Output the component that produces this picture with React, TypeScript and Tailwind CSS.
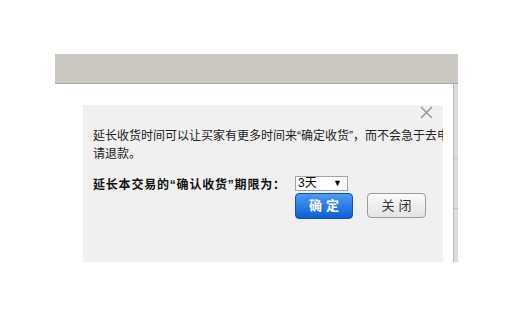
export default function App() {
  const cjk = { fontFamily: '"Liberation Sans", "Noto Sans CJK SC", sans-serif' };
  return (
    <div className="relative w-[527px] h-[318px] bg-white overflow-hidden" style={cjk}>
      {/* page behind the dialog */}
      <div className="ml-[55px] mt-[54px] w-[403px]">
        <div className="h-[30px] bg-[#cbc8c2] border-b border-[#a8a59f]" />
        <div className="flex h-[178px]">
          <div className="flex-1 bg-white border-r border-[#b9b9b9]" />
          <div className="w-[4px] bg-[#dcdcdc] flex flex-col">
            <div className="h-[75px] border-b border-[#c4c4c4]" />
            <div className="h-[50px] border-b border-[#c4c4c4]" />
          </div>
        </div>
      </div>

      {/* dialog */}
      <div className="absolute left-[83px] top-[105px] w-[360px] h-[157px] bg-[#f0f0f0] overflow-hidden">
        <button className="absolute left-[337px] top-[1px] w-[13px] h-[13px]">
          <svg width="13" height="13" viewBox="0 0 13 13">
            <path d="M1 1 L12 12 M12 1 L1 12" stroke="#9a9a9a" strokeWidth="1.6" />
          </svg>
        </button>
        <div className="pl-[10px] pt-[22px] text-[12px] text-[#222]">
          <p className="leading-[18px] whitespace-nowrap">
            延长收货时间可以让买家有更多时间来“确定收货”，而不会急于去申
            <br />
            请退款。
          </p>
          <div className="mt-[13px] flex items-start">
            <div className="w-[202px] pt-[2px] font-bold leading-[14px] tracking-[0.8px] text-[#111]">
              延长本交易的“确认收货”期限为：
            </div>
            <div className="w-[53px] h-[15px] bg-white border border-[#a5a5a5] flex items-center justify-between px-[2px] text-[12px] leading-[13px] text-black">
              <span>3天</span>
              <span className="text-[9px] mr-[3px]">▼</span>
            </div>
          </div>
          <div className="pl-[202px] mt-[1px] flex gap-[14px]">
            <button className="w-[58px] h-[26px] rounded-[4px] border border-[#1452b4] bg-gradient-to-b from-[#4a9af5] to-[#0a5fd6] text-white font-bold text-[13px] tracking-[4px] pl-[4px]">
              确定
            </button>
            <button className="w-[59px] h-[25px] rounded-[4px] border border-[#9c9c9c] bg-gradient-to-b from-[#fbfbfb] to-[#e4e4e4] text-[#333] text-[13px] tracking-[4px] pl-[4px]">
              关闭
            </button>
          </div>
        </div>
      </div>
    </div>
  );
}
